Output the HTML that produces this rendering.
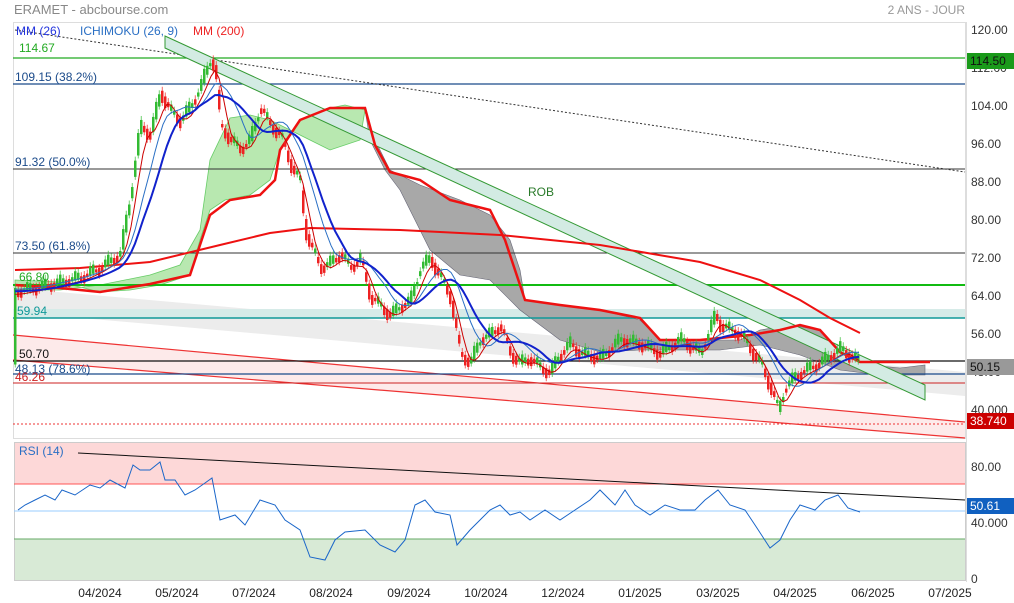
<!DOCTYPE html>
<html><head><meta charset="utf-8"><style>
body{margin:0;background:#fff;width:1014px;height:603px;overflow:hidden;font-family:"Liberation Sans",sans-serif}
svg{display:block}
text{font-family:"Liberation Sans",sans-serif}
</style></head><body>
<svg id="s" width="1014" height="603" xmlns="http://www.w3.org/2000/svg">
<rect width="1014" height="603" fill="#fff"/>
<text x="14" y="14" font-size="13" fill="#888">ERAMET - abcbourse.com</text>
<text x="965" y="14" font-size="12" fill="#999" text-anchor="end">2 ANS - JOUR</text>
<!-- main panel -->
<rect x="13.5" y="22.5" width="952" height="416" fill="#fff" stroke="#ddd"/>
<!-- red channel -->
<polygon points="13,335 965,422 965,438 13,360" fill="#fdeaea"/>
<line x1="13" y1="335" x2="965" y2="422" stroke="#e33" stroke-width="1.2"/>
<line x1="13" y1="360" x2="965" y2="438" stroke="#e33" stroke-width="1.2"/>
<!-- grey band -->
<polygon points="13,288 965,372 965,396 13,312" fill="#ececec"/>
<!-- teal band -->
<rect x="13" y="309" width="952" height="9" fill="#d6ebe8"/>
<g id="clouds"></g>
<!-- horizontal levels -->
<line x1="13" y1="58" x2="965" y2="58" stroke="#2a2" stroke-width="1.3"/>
<line x1="13" y1="84" x2="965" y2="84" stroke="#1a4a8a" stroke-width="1.2"/>
<line x1="13" y1="169" x2="965" y2="169" stroke="#333" stroke-width="1"/>
<line x1="13" y1="253" x2="965" y2="253" stroke="#333" stroke-width="1"/>
<line x1="13" y1="285" x2="965" y2="285" stroke="#1b1" stroke-width="2"/>
<line x1="13" y1="318" x2="965" y2="318" stroke="#199" stroke-width="1.5"/>
<line x1="13" y1="361" x2="965" y2="361" stroke="#111" stroke-width="1.2"/>
<line x1="13" y1="374" x2="965" y2="374" stroke="#1a4a8a" stroke-width="1.2"/>
<line x1="13" y1="383" x2="965" y2="383" stroke="#c22" stroke-width="1"/>
<line x1="13" y1="424" x2="965" y2="424" stroke="#e33" stroke-width="1" stroke-dasharray="2,2"/>
<!-- dotted trend -->
<line x1="15" y1="30" x2="965" y2="172" stroke="#333" stroke-width="1" stroke-dasharray="2,2"/>
<!-- green channel -->
<polygon points="165,36 925,385 925,400 165,48" fill="#d3ebe3" stroke="#393" stroke-width="1"/>
<text x="528" y="196" font-size="12" fill="#2a7a2a">ROB</text>
<g id="lines"></g>
<!-- labels -->
<text x="16" y="35" font-size="12" fill="#2233dd">MM (26)</text>
<text x="80" y="35" font-size="12" fill="#2a6fc4">ICHIMOKU (26, 9)</text>
<text x="193" y="35" font-size="12" fill="#e22">MM (200)</text>
<text x="19" y="52" font-size="12" fill="#2a2">114.67</text>
<text x="15" y="81" font-size="12" fill="#1a4a8a">109.15  (38.2%)</text>
<text x="15" y="166" font-size="12" fill="#1a4a8a">91.32  (50.0%)</text>
<text x="15" y="250" font-size="12" fill="#1a4a8a">73.50  (61.8%)</text>
<text x="19" y="281" font-size="12" fill="#2a2">66.80</text>
<text x="17" y="315" font-size="12" fill="#199">59.94</text>
<text x="19" y="358" font-size="12" fill="#111">50.70</text>
<text x="15" y="373" font-size="12" fill="#1a4a8a">48.13  (78.6%)</text>
<text x="15" y="381" font-size="12" fill="#c22">46.26</text>
<!-- right axis -->
<line x1="966.5" y1="22" x2="966.5" y2="582" stroke="#ddd"/>
<g font-size="12" fill="#333">
<text x="971" y="34">120.00</text><text x="971" y="72">112.00</text><text x="971" y="110">104.00</text>
<text x="971" y="148">96.00</text><text x="971" y="186">88.00</text><text x="971" y="224">80.00</text>
<text x="971" y="262">72.00</text><text x="971" y="300">64.00</text><text x="971" y="338">56.00</text>
<text x="971" y="376">48.00</text><text x="971" y="414">40.000</text>
<text x="971" y="471">80.00</text><text x="971" y="527">40.000</text><text x="971" y="583">0</text>
</g>
<rect x="967" y="53" width="47" height="16" fill="#1a9a1a"/><text x="970" y="65" font-size="12" fill="#111">114.50</text>
<rect x="967" y="359" width="47" height="16" fill="#999"/><text x="970" y="371" font-size="12" fill="#111">50.15</text>
<rect x="967" y="413" width="47" height="16" fill="#c00"/><text x="970" y="425" font-size="12" fill="#fff">38.740</text>
<rect x="967" y="498" width="47" height="16" fill="#1060c0"/><text x="970" y="510" font-size="12" fill="#fff">50.61</text>
<!-- RSI panel -->
<rect x="14" y="442" width="951" height="42" fill="#fdd8d8"/>
<rect x="14" y="539" width="951" height="41" fill="#d8ead6"/>
<rect x="14.5" y="442.5" width="951" height="138" fill="none" stroke="#ccc"/>
<line x1="14" y1="484" x2="965" y2="484" stroke="#f55"/>
<line x1="14" y1="511" x2="965" y2="511" stroke="#9cf"/>
<line x1="14" y1="539" x2="965" y2="539" stroke="#6a6"/>
<line x1="78" y1="453" x2="965" y2="500" stroke="#111" stroke-width="1"/>
<text x="19" y="455" font-size="12" fill="#2a6fc4">RSI (14)</text>
<g id="rsi"></g>
<g font-size="12" fill="#222" text-anchor="middle">
<text x="100" y="597">04/2024</text><text x="177" y="597">05/2024</text><text x="254" y="597">07/2024</text>
<text x="331" y="597">08/2024</text><text x="409" y="597">09/2024</text><text x="486" y="597">10/2024</text>
<text x="563" y="597">12/2024</text><text x="640" y="597">01/2025</text><text x="718" y="597">03/2025</text>
<text x="795" y="597">04/2025</text><text x="873" y="597">06/2025</text><text x="950" y="597">07/2025</text>
</g>
</svg>
<script>
var NS="http://www.w3.org/2000/svg";
function Y(p){return 30+(120-p)*4.75;}
function el(parent,tag,attrs){var e=document.createElementNS(NS,tag);for(var k in attrs)e.setAttribute(k,attrs[k]);document.getElementById(parent).appendChild(e);return e;}
var P=[[15,65],[40,66],[60,67],[80,68],[100,70],[120,73],[130,85],[140,100],[150,98],[160,107],[170,103],[180,101],[190,104],[200,108],[210,114],[215,112],[220,100],[230,97],[240,95],[250,97],[260,104],[270,100],[280,98],[290,92],[300,88],[305,78],[310,75],[320,70],[330,71],[340,73],[350,70],[360,72],[370,64],[380,62],[390,60],[400,62],[410,63],[420,70],[430,72],[440,68],[450,64],[455,58],[460,52],[470,50],[480,55],[490,56],[500,58],[510,52],[520,50],[530,51],[540,49],[550,48],[560,52],[570,54],[580,52],[600,51],[620,55],[640,54],[660,52],[680,55],[700,52],[715,60],[720,58],[740,56],[760,50],[770,45],[778,40],[785,45],[800,48],[820,50],[840,53],[860,50]];
function interp(x){for(var i=0;i<P.length-1;i++){if(x>=P[i][0]&&x<=P[i+1][0]){var t=(x-P[i][0])/(P[i+1][0]-P[i][0]);return P[i][1]+t*(P[i+1][1]-P[i][1]);}}return P[P.length-1][1];}
function pts(arr){return arr.map(function(a){return a[0]+","+a[1];}).join(" ");}
// clouds
el("clouds","polygon",{points:"15,280 60,282 100,292 130,290 160,285 190,275 200,240 210,210 225,200 250,195 270,180 280,150 300,120 320,110 345,105 365,110 360,140 330,150 310,140 290,130 270,120 250,115 230,118 210,160 200,230 180,265 150,275 100,285 60,290 15,290",fill:"#b8e8b0",stroke:"#6c6","stroke-width":"0.8"});
el("clouds","polygon",{points:"365,110 375,140 390,170 420,185 460,200 490,215 510,240 520,270 525,300 560,305 600,310 640,320 660,340 700,340 740,340 760,330 790,325 820,330 840,355 870,365 900,368 925,365 925,375 880,375 840,370 800,355 760,345 720,350 680,350 640,350 600,352 560,340 520,310 490,280 460,275 430,250 400,190 385,170 370,140",fill:"#a8a8a8",stroke:"#667","stroke-width":"0.6"});
// thick red kijun-like line
el("lines","polyline",{points:"15,285 60,288 100,292 150,284 190,275 200,245 210,215 230,200 260,195 275,180 280,150 300,120 330,108 365,108 375,145 390,172 420,180 450,200 490,210 505,240 515,270 525,300 560,305 600,310 640,318 660,340 700,340 750,335 780,330 800,325 820,330 840,352 860,362 930,362",fill:"none",stroke:"#e11","stroke-width":"2.5"});
// MM200
el("lines","polyline",{points:"15,270 80,268 150,262 220,245 270,233 310,228 400,230 500,235 600,245 700,262 760,280 800,300 830,318 860,333",fill:"none",stroke:"#e11","stroke-width":"2"});
// price + candles
var pp=[];for(var x=15;x<=860;x+=3){var p=interp(x)+Math.sin(x*1.7)*1.3;pp.push([x,Y(p)]);
var o=Y(interp(x-2)),c=Y(p);var up=c<o;el("lines","rect",{x:x-1,y:Math.min(o,c)-1,width:2.5,height:Math.abs(o-c)+3,fill:up?"#3b3":"#e22"});
el("lines","line",{x1:x+0.2,y1:Math.min(o,c)-5,x2:x+0.2,y2:Math.max(o,c)+5,stroke:up?"#3b3":"#e22","stroke-width":0.7});}
// tenkan-like thin lines
var t1=[],t2=[],m=[];for(var x=15;x<=860;x+=4){var s=0,n=0;for(var k=-12;k<=0;k+=2){s+=interp(Math.max(15,x+k));n++;}t1.push([x,Y(s/n)+3]);
var s2=0,n2=0;for(var k=-30;k<=0;k+=3){s2+=interp(Math.max(15,x+k));n2++;}t2.push([x,Y(s2/n2)-2]);
var s3=0,n3=0;for(var k=-45;k<=0;k+=3){s3+=interp(Math.max(15,x+k));n3++;}m.push([x,Y(s3/n3)]);}
el("lines","polyline",{points:pts(t1),fill:"none",stroke:"#c00","stroke-width":"1"});
el("lines","polyline",{points:pts(t2),fill:"none",stroke:"#2a6fc4","stroke-width":"1"});
el("lines","polyline",{points:pts(m),fill:"none",stroke:"#12c","stroke-width":"2"});
// RSI
var R=[[18,510],[25,505],[35,500],[45,495],[55,500],[62,490],[75,495],[90,485],[100,488],[110,480],[125,488],[133,465],[140,470],[150,470],[160,462],[165,480],[175,480],[185,495],[195,490],[205,483],[212,478],[220,520],[235,515],[245,525],[260,500],[275,505],[285,520],[300,530],[310,557],[325,560],[335,540],[345,532],[365,530],[380,545],[395,552],[405,540],[415,505],[425,500],[435,512],[450,515],[457,545],[470,530],[480,520],[490,510],[500,505],[510,515],[520,512],[530,520],[545,510],[560,520],[575,510],[590,500],[600,490],[615,505],[625,490],[635,505],[650,515],[665,505],[680,510],[695,510],[705,500],[718,490],[730,505],[745,510],[755,525],[770,548],[780,540],[790,520],[800,505],[815,510],[825,500],[838,495],[848,508],[860,512]];
el("rsi","polyline",{points:pts(R),fill:"none",stroke:"#1a66c9","stroke-width":"1"});
</script>
</body></html>
